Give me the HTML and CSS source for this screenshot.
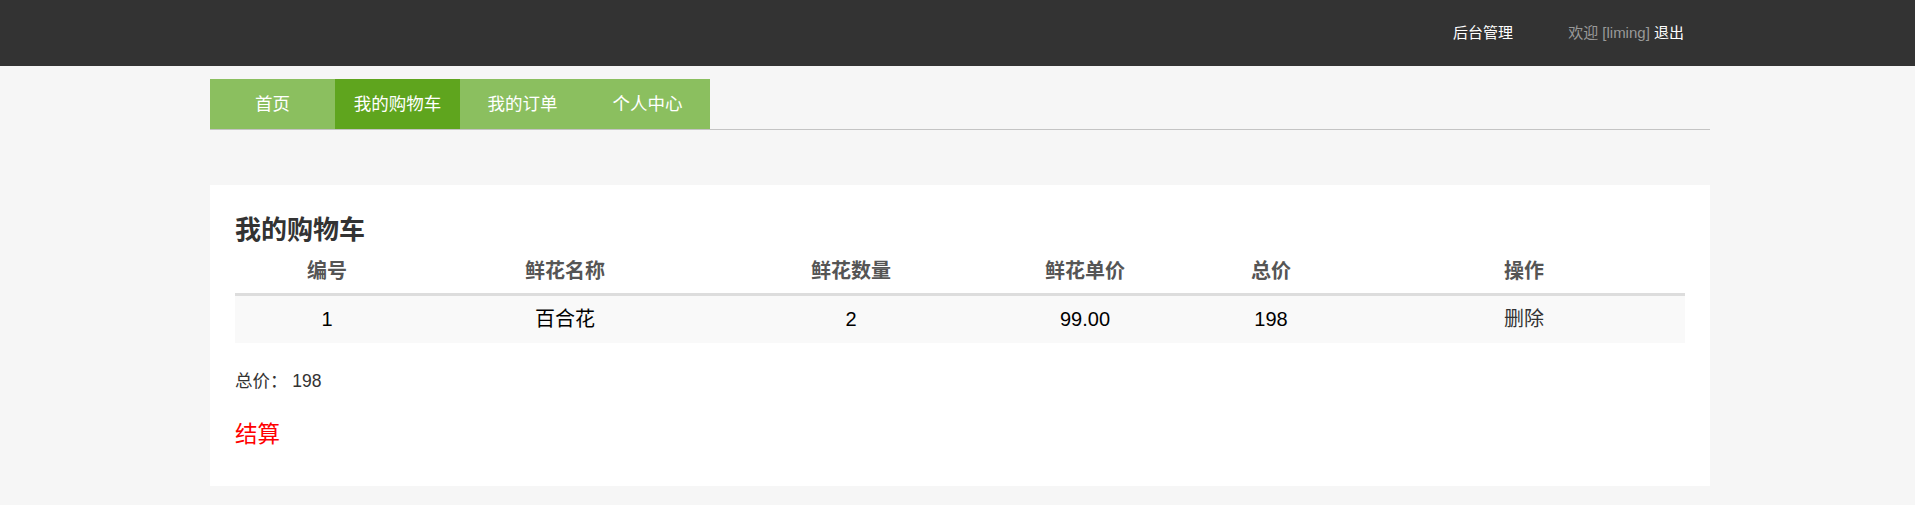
FILE: index.html
```html
<!DOCTYPE html>
<html lang="zh-CN">
<head>
<meta charset="utf-8">
<title>我的购物车</title>
<link rel="stylesheet" href="styles.css">
</head>
<body>
<header class="topbar">
  <div class="container topbar-inner">
    <a class="top-link" href="#">后台管理</a>
    <span class="welcome">欢迎 [liming] <a class="top-link" href="#">退出</a></span>
  </div>
</header>

<div class="container">
  <nav class="tabs">
    <a class="tab" href="#">首页</a>
    <a class="tab active" href="#">我的购物车</a>
    <a class="tab" href="#">我的订单</a>
    <a class="tab" href="#">个人中心</a>
  </nav>
</div>

<main class="container">
  <section class="card">
    <h3 class="card-title">我的购物车</h3>
    <table class="cart">
      <colgroup>
        <col class="c1"><col class="c2"><col class="c3"><col class="c4"><col class="c5"><col class="c6">
      </colgroup>
      <thead>
        <tr><th>编号</th><th>鲜花名称</th><th>鲜花数量</th><th>鲜花单价</th><th>总价</th><th>操作</th></tr>
      </thead>
      <tbody>
        <tr><td>1</td><td>百合花</td><td>2</td><td>99.00</td><td>198</td><td><a class="del" href="#">删除</a></td></tr>
      </tbody>
    </table>
    <p class="total">总价： 198</p>
    <a class="checkout" href="#">结算</a>
  </section>
</main>
</body>
</html>
```

FILE: styles.css
```css
html, body {
  margin: 0;
  padding: 0;
}
body {
  background: #f6f6f6;
  font-family: "Liberation Sans", "Noto Sans CJK SC", sans-serif;
  color: #333;
}
a { text-decoration: none; }

.container {
  width: 1500px;
  margin: 0 auto;
  padding-left: 5px;
}

.topbar {
  background: #333333;
  height: 66px;
}
.topbar-inner {
  display: flex;
  justify-content: flex-end;
  align-items: center;
  height: 66px;
  box-sizing: border-box;
  width: 1505px;
  padding-right: 26px;
  gap: 55px;
  font-size: 15px;
  line-height: 20px;
}
.top-link { color: #ffffff; }
.welcome { color: #999999; }

.tabs {
  display: flex;
  margin-top: 13px;
  border-bottom: 1px solid #c4c4c4;
}
.tab {
  width: 125px;
  height: 50px;
  line-height: 50px;
  text-align: center;
  background: #8bbf5f;
  color: #ffffff;
  font-size: 17.5px;
}
.tab.active { background: #5fa51e; }

.card {
  margin-top: 55px;
  background: #ffffff;
  padding: 30px 25px 35px;
}
.card-title {
  margin: 0;
  font-size: 26px;
  line-height: 30px;
  font-weight: bold;
  color: #333;
}

.cart {
  margin-top: 4px;
  width: 1450px;
  border-collapse: collapse;
  table-layout: fixed;
  font-size: 20px;
}
.c1 { width: 184px; }
.c2 { width: 292px; }
.c3 { width: 280px; }
.c4 { width: 188px; }
.c5 { width: 184px; }
.c6 { width: 322px; }
.cart th {
  padding: 8px 0;
  line-height: 28px;
  color: #555;
  font-weight: bold;
  text-align: center;
  border-bottom: 3px solid #dddddd;
}
.cart td {
  padding: 9px 0;
  line-height: 29px;
  text-align: center;
  color: #000;
  background: #f9f9f9;
}
.del { color: #333; }

.total {
  margin: 26px 0 0;
  font-size: 17.5px;
  line-height: 25px;
  color: #333;
}
.checkout {
  display: block;
  margin-top: 25px;
  font-size: 22.5px;
  line-height: 32px;
  color: #ff0000;
  width: max-content;
}
```
